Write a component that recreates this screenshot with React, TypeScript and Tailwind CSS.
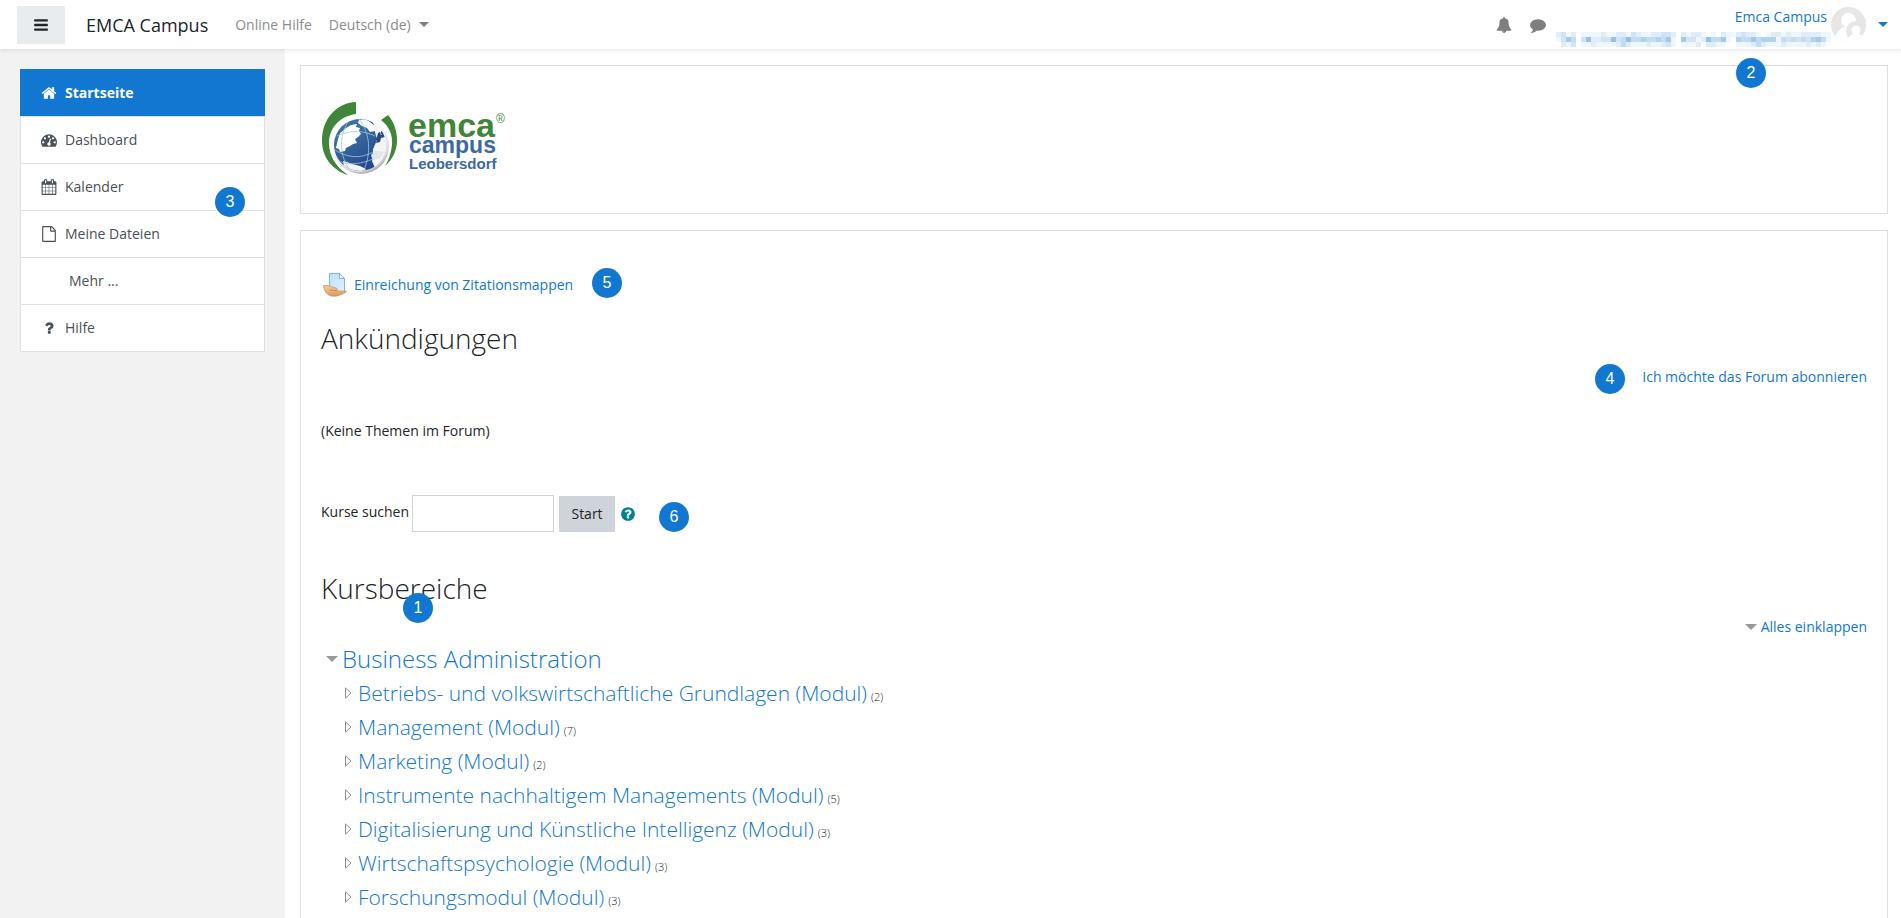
import React from 'react';
import { clsx } from 'clsx';

const ICONS = {
  bars: 'M1664 1344v128q0 26-19 45t-45 19h-1408q-26 0-45-19t-19-45v-128q0-26 19-45t45-19h1408q26 0 45 19t19 45zm0-512v128q0 26-19 45t-45 19h-1408q-26 0-45-19t-19-45v-128q0-26 19-45t45-19h1408q26 0 45 19t19 45zm0-512v128q0 26-19 45t-45 19h-1408q-26 0-45-19t-19-45v-128q0-26 19-45t45-19h1408q26 0 45 19t19 45z',
  home: 'M1472 992v480q0 26-19 45t-45 19h-384v-384h-256v384h-384q-26 0-45-19t-19-45v-480q0-1 .5-3t.5-3l575-474 575 474q1 2 1 6zm223-69l-62 74q-8 9-21 11h-3q-13 0-21-7l-692-577-692 577q-12 8-24 7-13-2-21-11l-62-74q-8-10-7-23.5t11-21.5l719-599q32-26 76-26t76 26l244 204v-195q0-14 9-23t23-9h192q14 0 23 9t9 23v408l219 182q10 8 11 21.5t-7 23.5z',
  dashboard: 'M384 1152q0-53-37.5-90.5t-90.5-37.5-90.5 37.5-37.5 90.5 37.5 90.5 90.5 37.5 90.5-37.5 37.5-90.5zm192-448q0-53-37.5-90.5t-90.5-37.5-90.5 37.5-37.5 90.5 37.5 90.5 90.5 37.5 90.5-37.5 37.5-90.5zm428 481l101-382q6-26-7.5-48.5t-38.5-29.5-48 6.5-30 39.5l-101 382q-60 5-107 43.5t-63 98.5q-20 77 20 146t117 89 146-20 89-117q16-60-6-117t-72-91zm660-33q0-53-37.5-90.5t-90.5-37.5-90.5 37.5-37.5 90.5 37.5 90.5 90.5 37.5 90.5-37.5 37.5-90.5zm-640-640q0-53-37.5-90.5t-90.5-37.5-90.5 37.5-37.5 90.5 37.5 90.5 90.5 37.5 90.5-37.5 37.5-90.5zm448 192q0-53-37.5-90.5t-90.5-37.5-90.5 37.5-37.5 90.5 37.5 90.5 90.5 37.5 90.5-37.5 37.5-90.5zm320 448q0 261-141 483-19 29-54 29h-1402q-35 0-54-29-141-221-141-483 0-182 71-348t191-286 286-191 348-71 348 71 286 191 191 286 71 348z',
  calendar: 'M192 1664h288v-288h-288v288zm352 0h320v-288h-320v288zm-352-352h288v-320h-288v320zm352 0h320v-320h-320v320zm-352-384h288v-288h-288v288zm736 736h320v-288h-320v288zm-384-736h320v-288h-320v288zm768 736h288v-288h-288v288zm-384-352h320v-320h-320v320zm-352-864v-288q0-13-9.5-22.5t-22.5-9.5h-64q-13 0-22.5 9.5t-9.5 22.5v288q0 13 9.5 22.5t22.5 9.5h64q13 0 22.5-9.5t9.5-22.5zm736 864h288v-320h-288v320zm-384-384h320v-288h-320v288zm384 0h288v-288h-288v288zm32-480v-288q0-13-9.5-22.5t-22.5-9.5h-64q-13 0-22.5 9.5t-9.5 22.5v288q0 13 9.5 22.5t22.5 9.5h64q13 0 22.5-9.5t9.5-22.5zm384-64v1280q0 52-38 90t-90 38h-1408q-52 0-90-38t-38-90v-1280q0-52 38-90t90-38h128v-96q0-66 47-113t113-47h64q66 0 113 47t47 113v96h384v-96q0-66 47-113t113-47h64q66 0 113 47t47 113v96h128q52 0 90 38t38 90z',
  file: 'M1596 380q28 28 48 76t20 88v1152q0 40-28 68t-68 28h-1344q-40 0-68-28t-28-68v-1600q0-40 28-68t68-28h896q40 0 88 20t76 48zm-444-244v376h376q-10-29-22-41l-313-313q-12-12-41-22zm384 1528v-1024h-416q-40 0-68-28t-28-68v-416h-768v1536h1280z',
  question: 'M1088 1256v240q0 16-12 28t-28 12h-240q-16 0-28-12t-12-28v-240q0-16 12-28t28-12h240q16 0 28 12t12 28zm316-600q0 54-15.5 101t-35 76.5-55 59.5-57.5 43.5-61 35.5q-41 23-68.5 65t-27.5 67q0 17-12 32.5t-28 15.5h-240q-15 0-25.5-18.5t-10.5-37.5v-45q0-83 65-156.5t143-108.5q59-27 84-56t25-76q0-42-46.5-74t-107.5-32q-65 0-108 29-35 25-107 115-13 16-31 16-12 0-25-8l-164-125q-13-10-15.5-25t5.5-28q160-266 464-266 80 0 161 31t146 83 106 127.5 41 158.5z',
  help: 'M1024 1376v-192q0-14-9-23t-23-9h-192q-14 0-23 9t-9 23v192q0 14 9 23t23 9h192q14 0 23-9t9-23zm256-672q0-88-55.5-163t-138.5-116-170-41q-243 0-371 213-15 24 8 42l132 100q7 6 19 6 16 0 25-12 53-68 86-92 34-24 86-24 48 0 85.5 26t37.5 59q0 38-20 61t-68 45q-63 28-115.5 86.5t-52.5 125.5v36q0 14 9 23t23 9h192q14 0 23-9t9-23q0-19 21.5-49.5t54.5-49.5q32-18 49-28.5t46-35 44.5-48 28-60.5 12.5-81zm384 192q0 209-103 385.5t-279.5 279.5-385.5 103-385.5-103-279.5-279.5-103-385.5 103-385.5 279.5-279.5 385.5-103 385.5 103 279.5 279.5 103 385.5z',
  bell: 'M912 1696q0-16-16-16-59 0-101.5-42.5t-42.5-101.5q0-16-16-16t-16 16q0 73 51.5 124.5t124.5 51.5q16 0 16-16zm816-288q0 52-38 90t-90 38h-448q0 106-75 181t-181 75-181-75-75-181h-448q-52 0-90-38t-38-90q50-42 91-88t85-119.5 74.5-158.5 50-206 19.5-260q0-152 117-282.5t307-158.5q-8-19-8-39 0-40 28-68t68-28 68 28 28 68q0 20-8 39 190 28 307 158.5t117 282.5q0 139 19.5 260t50 206 74.5 158.5 85 119.5 91 88z',
  comment: 'M1792 896q0 174-120 321.5t-326 233-450 85.5q-70 0-145-8-198 175-460 242-49 14-114 22-17 2-30.5-9t-17.5-29v-1q-3-4-.5-12t2-10 4.5-9.5l6-9 7-8.5 8-9q7-8 31-34.5t34.5-38 31-39.5 32.5-51 27-59 26-76q-157-89-247.5-220t-90.5-281q0-174 120-321.5t326-233 450-85.5 450 85.5 326 233 120 321.5z',
};

type IconName = keyof typeof ICONS;

function Icon({ name, className }: { name: IconName; className?: string }) {
  return (
    <svg viewBox="0 0 1792 1792" fill="currentColor" className={clsx('shrink-0', className)} aria-hidden="true">
      <path d={ICONS[name]} />
    </svg>
  );
}

function Caret({ large, className }: { large?: boolean; className?: string }) {
  return (
    <svg viewBox="0 0 10 5" fill="currentColor" className={clsx('shrink-0', large ? 'h-[6px] w-3' : 'h-[5px] w-[10px]', className)} aria-hidden="true">
      <path d="M0 0h10L5 5z" />
    </svg>
  );
}

function Marker({ n, className }: { n: number; className: string }) {
  return (
    <span className={clsx('absolute z-10 flex size-[30px] items-center justify-center rounded-full bg-[#1177d1] font-["Liberation_Sans",sans-serif] text-base text-white', className)}>
      {n}
    </span>
  );
}

// censored user line, one digit per block, higher is darker
const MOSAIC = [
  '2312011112112213211223320212210102112322101221211222211',
  '1364037223373474454454610633127446105446455514343435641',
  '0213011211112421112112310111202211001112421112111121210',
];

function Censored() {
  return (
    <svg viewBox="0 0 55 3" className="h-[15px] w-[275px]" preserveAspectRatio="none" shapeRendering="crispEdges" aria-hidden="true">
      {MOSAIC.map((line, y) =>
        [...line].map((v, x) => <rect key={`${x}-${y}`} x={x} y={y} width="1" height="1" fill="#1177d1" fillOpacity={Number(v) * 0.065} />),
      )}
    </svg>
  );
}

function UserPicture() {
  return (
    <svg viewBox="0 0 35 35" className="size-[35px] shrink-0" aria-hidden="true">
      <defs>
        <clipPath id="user-disc"><circle cx="17.5" cy="17.5" r="17.5" /></clipPath>
      </defs>
      <g clipPath="url(#user-disc)">
        <rect width="35" height="35" fill="#e6e6e6" />
        <circle cx="17.5" cy="13.5" r="7.5" fill="#fff" />
        <path d="M3 35c1-9 5-13 10-15l9 1v14z" fill="#fff" />
        <circle cx="25" cy="24" r="10" fill="#e6e6e6" />
        <circle cx="25" cy="23" r="4.5" fill="#fff" />
        <path d="M16.500 35c.5-5 3-7.500 6-8h5c3 .5 5.500 3 6 8z" fill="#fff" />
      </g>
    </svg>
  );
}

function Logo() {
  return (
    <svg viewBox="0 0 190 80" className="h-20 w-[190px]" role="img" aria-label="emca campus Leobersdorf">
      <defs>
        <radialGradient id="sphere" cx="45%" cy="40%" r="60%">
          <stop offset="0.75" stopColor="#fafafa" />
          <stop offset="0.92" stopColor="#dcdcdc" />
          <stop offset="1" stopColor="#a8a8a8" />
        </radialGradient>
        <linearGradient id="ocean" x1="0" y1="0" x2="0.5" y2="1">
          <stop offset="0" stopColor="#3f79b0" />
          <stop offset="0.5" stopColor="#38699f" />
          <stop offset="1" stopColor="#274a8c" />
        </linearGradient>
        <clipPath id="globe"><circle cx="39" cy="45" r="26" /></clipPath>
      </defs>
      <path d="M35 2C15 3 1 19 1 41c0 16 10 29 26 34C15 67 8 56 8 43c0-15 11-27 27-29z" fill="#40863a" />
      <path d="M67 15l-7 5c8 6 12 15 11 25-1 8-3 15-7 21 8-7 12-16 12-26 0-9-3-18-9-25z" fill="#40863a" />
      <circle cx="40" cy="46" r="28" fill="url(#sphere)" />
      <g clipPath="url(#globe)">
        <path d="M10 16h40l3 9 4 8v8l-5 8v8l3 5-3 10H22L10 60z" fill="url(#ocean)" />
        <path d="M17 39l2-6 6-5 5-3 6-1-1 3 4 1-1 3 2 3-3 3-3 2 2 4-4 1-3 2-4 2-1 3-5 1-1-3-3-1z" fill="#fff" />
        <path d="M38 20l6-1 5 3 6 5-1 4-5 1-3-4-5-2-4-3z" fill="#fff" />
        <path d="M53 24l10 8 3 14-3 14-9 8-3-7 1-6 1-8 3-7-2-8z" fill="#f4f4f4" />
        <path d="M22 61l4 1 5 2 8 2 6 3-2 4H30l-7-6z" fill="#f4f4f4" />
        <path d="M54 39l2-2 1-4 2-1 1 3 3-1 1 3-4 1-1 4-4 1 1-3zM60 31l3 1-1 3-2-1z" fill="#274a8c" />
        <path d="M54 51l-4 4 2 6 7-3 4-6-5-1z" fill="#dfe6ee" />
        <path d="M14 50c12 8 26 9 38 2M16 36c12-6 26-6 38 0M38 19c11 14 13 34 4 53M27 22C18 36 18 56 29 70M20 62c10 3 20 2 32-3" fill="none" stroke="#9cc8e6" strokeWidth="0.8" />
      </g>
      <g className='font-["Liberation_Sans",Arial,sans-serif] font-bold'>
        <text x="87" y="37" fontSize="34" fill="#40863a">emca</text>
        <text x="175" y="23" fontSize="12" fontWeight="400" fill="#40863a">®</text>
        <text x="88" y="53" fontSize="23" fill="#3b69a8">campus</text>
        <text x="88" y="69" fontSize="15" fill="#3b69a8">Leobersdorf</text>
      </g>
    </svg>
  );
}

function AssignmentIcon() {
  return (
    <svg viewBox="0 0 24 24" className="size-6 shrink-0" aria-hidden="true">
      <defs>
        <linearGradient id="sheet" x1="0" y1="0" x2="1" y2="1">
          <stop offset="0" stopColor="#bfe0fb" />
          <stop offset="1" stopColor="#dff1ff" />
        </linearGradient>
        <linearGradient id="hand" x1="0" y1="0" x2="0" y2="1">
          <stop offset="0" stopColor="#f7cf9e" />
          <stop offset="1" stopColor="#d9985a" />
        </linearGradient>
      </defs>
      <path d="M6.500.5h10l5 5v14h-15z" fill="url(#sheet)" stroke="#7fb0ee" />
      <path d="M16.500.5v5h5z" fill="#f2f9ff" stroke="#7fb0ee" strokeLinejoin="round" />
      <path d="M.5 12.500c3-.6 6 .3 9 1.500 2 .8 4.500 1 5 2.200.3 1-1 1.400-2.500 1.300 4 .9 7 .3 11.500.8-1 2-5 3-8 4.200-2.500 1-5.500 1-8 .3-2.500-1-4.500-2.500-5.500-5-.5-1.300-1.500-3.300-1.500-5.300z" fill="url(#hand)" stroke="#c58d55" strokeWidth="0.7" />
      <path d="M7 16.500c2 .8 4 1.200 6 1" fill="none" stroke="#b87840" strokeWidth="0.7" />
    </svg>
  );
}

const NAV: { label: string; icon?: IconName; active?: boolean }[] = [
  { label: 'Startseite', icon: 'home', active: true },
  { label: 'Dashboard', icon: 'dashboard' },
  { label: 'Kalender', icon: 'calendar' },
  { label: 'Meine Dateien', icon: 'file' },
  { label: 'Mehr ...' },
  { label: 'Hilfe', icon: 'question' },
];

const CATEGORIES = [
  { name: 'Betriebs- und volkswirtschaftliche Grundlagen (Modul)', count: 2 },
  { name: 'Management (Modul)', count: 7 },
  { name: 'Marketing (Modul)', count: 2 },
  { name: 'Instrumente nachhaltigem Managements (Modul)', count: 5 },
  { name: 'Digitalisierung und Künstliche Intelligenz (Modul)', count: 3 },
  { name: 'Wirtschaftspsychologie (Modul)', count: 3 },
  { name: 'Forschungsmodul (Modul)', count: 3 },
];

function Header() {
  return (
    <header className="sticky top-0 z-20 flex h-[49px] items-center bg-white pl-[17px] pr-[13px] shadow-[0_2px_4px_rgba(0,0,0,0.08)]">
      <button aria-label="Navigation" className="flex h-[38px] w-12 items-center justify-center bg-[#e9ecef] text-[#212529]">
        <Icon name="bars" className="size-4" />
      </button>
      <a href="#" className="ml-[21px] text-lg text-[#212529]">EMCA Campus</a>
      <nav className="ml-[27px] flex items-center gap-[17px] text-[#8c8c8c]">
        <a href="#">Online Hilfe</a>
        <button className="flex items-center gap-2">
          Deutsch (de)
          <Caret className="text-[#7f7f7f]" />
        </button>
      </nav>
      <div className="ml-auto flex items-center">
        <button aria-label="Mitteilungen" className="text-[#7f7f7f]"><Icon name="bell" className="size-4" /></button>
        <button aria-label="Nachrichten" className="ml-[18px] text-[#7f7f7f]"><Icon name="comment" className="size-4" /></button>
      </div>
      <div className="relative ml-[10px] flex items-center">
        <div className="flex flex-col items-end gap-1 pt-1">
          <a href="#" className="pr-1 leading-[22px] text-[#1177d1]">Emca Campus</a>
          <Censored />
        </div>
        <UserPicture />
        <button aria-label="Nutzermenü" className="ml-3 text-[#1177d1]"><Caret /></button>
        <Marker n={2} className="right-[122px] top-[56px]" />
      </div>
    </header>
  );
}

function Sidebar() {
  return (
    <aside className="w-[285px] shrink-0 bg-[#f2f2f2] px-5 pt-5">
      <nav className="relative">
        <ul className="border-b border-[#dfdfdf]">
          {NAV.map(({ label, icon, active }) => (
            <li key={label}>
              <a
                href="#"
                className={clsx(
                  'flex h-[47px] items-center gap-2 border-x border-t px-5',
                  active ? 'border-[#1177d1] bg-[#1177d1] font-bold text-white' : 'border-[#dfdfdf] bg-white text-[#495057]',
                )}
              >
                {icon ? <Icon name={icon} className="size-4" /> : <span className="w-5" />}
                {label}
              </a>
            </li>
          ))}
        </ul>
        <Marker n={3} className="right-5 top-[118px]" />
      </nav>
    </aside>
  );
}

function Panel({ children, className }: { children: React.ReactNode; className?: string }) {
  return <section className={clsx('border border-[#dfdfdf] bg-white px-5', className)}>{children}</section>;
}

function CourseSearch() {
  return (
    <form className="relative mt-[53px] flex items-center" onSubmit={(e) => e.preventDefault()}>
      <label htmlFor="coursesearch" className="pb-1">Kurse suchen</label>
      <input id="coursesearch" type="text" className="ml-[3px] h-[37px] w-[142px] border border-[#ced4da] px-3" />
      <button className="ml-[5px] h-9 w-14 bg-[#ced4da] text-[#212529]">Start</button>
      <button type="button" aria-label="Hilfe" className="ml-[5px] text-[#008196]"><Icon name="help" className="size-4" /></button>
      <Marker n={6} className="left-[338px] top-[7px]" />
    </form>
  );
}

function CourseCategories() {
  return (
    <div className="mt-1">
      <h3 className="flex h-[34px] items-center gap-1 text-2xl font-light text-[#1177d1]">
        <Caret large className="ml-[5px] text-[#999]" />
        <a href="#">Business Administration</a>
      </h3>
      <ul className="pl-6">
        {CATEGORIES.map(({ name, count }) => (
          <li key={name} className="flex h-[34px] items-center">
            <svg viewBox="0 0 7 12" className="h-3 w-[7px] shrink-0" aria-hidden="true">
              <path d="M.5.900v10.200L6 6z" fill="#fff" stroke="#8e8e8e" />
            </svg>
            <p className="ml-[6px] font-light">
              <a href="#" className="text-[21px] text-[#1177d1]">{name}</a>
              <span className="ml-1 text-[11px]">({count})</span>
            </p>
          </li>
        ))}
      </ul>
    </div>
  );
}

export default function App() {
  return (
    <div className='flex min-h-screen flex-col bg-white font-["Open_Sans","Noto_Sans",sans-serif] text-sm text-[#212529]'>
      <Header />
      <div className="flex grow">
        <Sidebar />
        <main className="min-w-0 grow pb-6 pl-[15px] pr-[13px] pt-4">
          <Panel className="h-[149px] pt-[34px]">
            <Logo />
          </Panel>
          <Panel className="mt-4 pb-8 pt-[35px]">
            <div className="relative flex h-[38px] items-center gap-[7px] pl-[2px]">
              <AssignmentIcon />
              <a href="#" className="text-[#1177d1]">Einreichung von Zitationsmappen</a>
              <Marker n={5} className="left-[271px] top-[2px]" />
            </div>
            <h2 className="mt-[14px] text-[28px] font-light leading-[40px]">Ankündigungen</h2>
            <div className="mt-2 flex justify-end leading-[22px]">
              <div className="relative">
                <Marker n={4} className="right-[242px] -top-[2px]" />
                <a href="#" className="text-[#1177d1]">Ich möchte das Forum abonnieren</a>
              </div>
            </div>
            <p className="mt-8 leading-[22px]">(Keine Themen im Forum)</p>
            <CourseSearch />
            <div className="relative mt-9">
              <h2 className="text-[28px] font-light leading-[40px]">Kursbereiche</h2>
              <Marker n={1} className="left-[82px] top-[25px]" />
            </div>
            <div className="mt-2 flex justify-end leading-[22px]">
              <button className="flex items-center gap-1 text-[#1177d1]">
                <Caret large className="text-[#999]" />
                Alles einklappen
              </button>
            </div>
            <CourseCategories />
          </Panel>
        </main>
      </div>
    </div>
  );
}
